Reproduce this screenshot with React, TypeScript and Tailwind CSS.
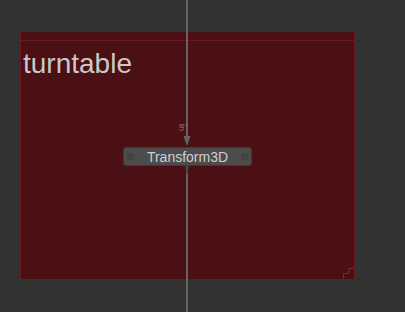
import React from "react";

export default function App() {
  return (
    <div
      className="relative w-[405px] h-[312px] overflow-hidden bg-[#323232]"
      style={{ fontFamily: '"Liberation Sans", Arial, sans-serif' }}
    >
      {/* backdrop */}
      <div className="absolute left-[20px] top-[31px] w-[335px] h-[249px] bg-[#4a1013] border border-[#6c1a20]">
        <div className="h-[9px] border-b border-[#6c1a20]" />
        <div className="pl-[2px] pt-[7px] text-[28px] leading-[32px] text-[#c9c9c9]">turntable</div>
        {/* resize corner */}
        <svg className="absolute right-0 bottom-0" width="11" height="11" viewBox="0 0 11 11">
          <path d="M0.5 11 V5.5 H5.5 V0.5 H11" fill="none" stroke="#842430" strokeWidth="1" />
        </svg>
      </div>

      {/* wire top */}
      <div className="absolute left-[186px] top-0 w-[2px] h-[138px] bg-[#636363]" />
      <svg className="absolute left-[182px] top-[136px]" width="10" height="11" viewBox="0 0 10 11">
        <polygon points="1.5,0 8.5,0 5,10" fill="#636363" />
      </svg>
      {/* wire bottom */}
      <div className="absolute left-[186px] top-[166px] w-[2px] h-[146px] bg-[#636363]" />
      <svg className="absolute left-[182px] top-[165px]" width="10" height="9" viewBox="0 0 10 9">
        <polygon points="1,0 9,0 5,8" fill="#2c2c2c" />
        <rect x="4" y="0" width="2" height="9" fill="#4a4a4a" />
      </svg>

      {/* input label */}
      <div
        className="absolute left-[186px] top-[124px] text-[9px] leading-[9px] text-[#9a7272]"
        style={{ transform: "rotate(90deg)", transformOrigin: "left top" }}
      >
        in
      </div>

      {/* node */}
      <div className="absolute left-[123px] top-[147px] w-[129px] h-[19px] rounded-[3px] bg-[#4c4c4c] border border-[#3a3a3a] flex items-center justify-between px-[3px]">
        <div className="w-[7px] h-[7px] bg-[#434343]" />
        <div className="text-[14px] leading-[16px] text-[#d0d0d0]">Transform3D</div>
        <div className="w-[7px] h-[7px] bg-[#434343]" />
      </div>
    </div>
  );
}
